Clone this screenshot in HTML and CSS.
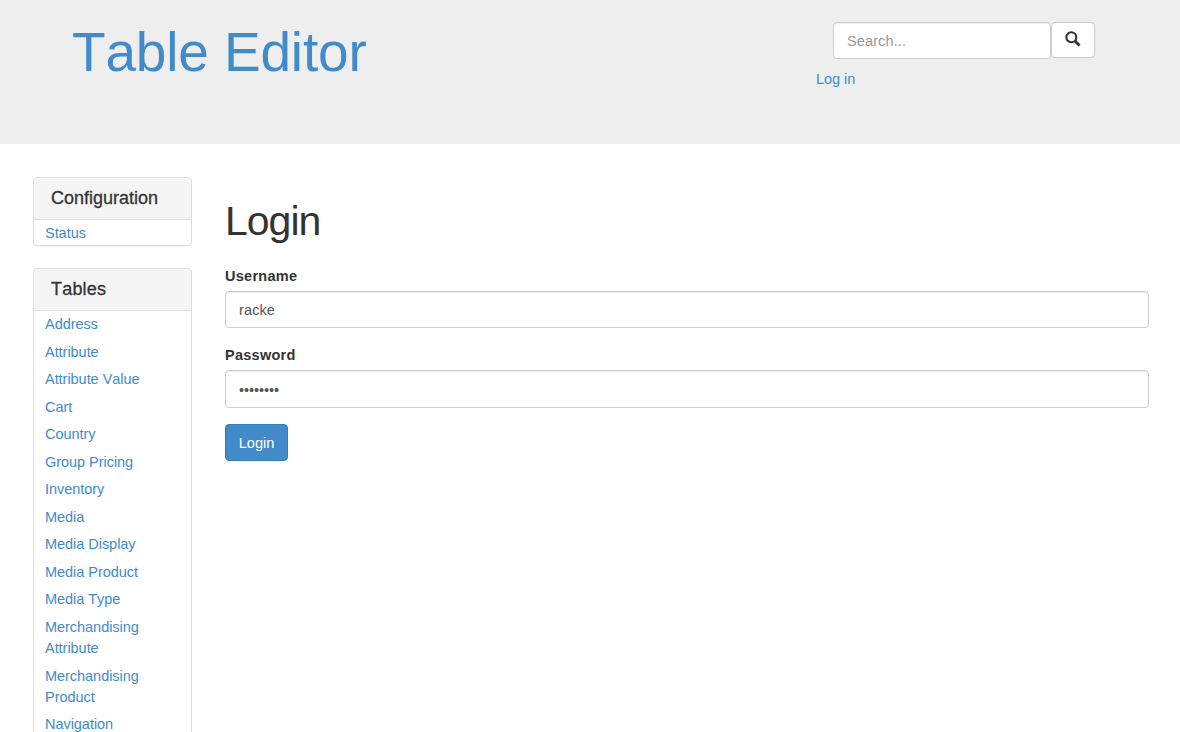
FILE: index.html
```html
<!DOCTYPE html>
<html lang="en"><head><meta charset="utf-8"><title>Table Editor</title><link rel="stylesheet" href="styles.css"></head>
<body>
<header class="jumbotron">
<h1 class="brand"><a href="#">Table Editor</a></h1>
<div class="tools">
<form class="search"><input class="control search-input" type="text" placeholder="Search..."><button class="search-button" type="button" aria-label="Search"><svg class="icon" viewBox="0 0 16 16"><circle cx="6.3" cy="6.3" r="5" fill="none" stroke="#333" stroke-width="2.1"/><path d="M10 10l4.5 4.5" stroke="#333" stroke-width="2.8"/></svg></button></form>
<a class="login-link" href="#">Log in</a>
</div>
</header>
<div class="page">
<aside class="sidebar">
<section class="panel"><h3 class="panel-title">Configuration</h3><ul class="links"><li><a href="#">Status</a></li></ul></section>
<section class="panel"><h3 class="panel-title panel-title-wide">Tables</h3><ul class="links"><li><a href="#">Address</a></li><li><a href="#">Attribute</a></li><li><a href="#">Attribute Value</a></li><li><a href="#">Cart</a></li><li><a href="#">Country</a></li><li><a href="#">Group Pricing</a></li><li><a href="#">Inventory</a></li><li><a href="#">Media</a></li><li><a href="#">Media Display</a></li><li><a href="#">Media Product</a></li><li><a href="#">Media Type</a></li><li><a href="#">Merchandising Attribute</a></li><li><a href="#">Merchandising Product</a></li><li><a href="#">Navigation</a></li></ul></section>
</aside>
<main class="content">
<h1 class="title">Login</h1>
<form>
<div class="group"><label class="label" for="u">Username</label><input class="control" id="u" type="text" value="racke"></div>
<div class="group"><label class="label" for="p">Password</label><input class="control password" id="p" type="password" value="password"></div>
<button class="submit" type="button">Login</button>
</form>
</main>
</div>
</body></html>
```
FILE: styles.css
```css
* { box-sizing: border-box; }
html { height: 100%; overflow: hidden; }
body { margin: 0; height: 732px; overflow: hidden; background: #fff; color: #333; font: 14.5px/21px "Liberation Sans", Arial, sans-serif; letter-spacing: -.04px; font-kerning: none; }
a { color: #428bca; text-decoration: none; }
.jumbotron { height: 144px; background: #eee; display: flex; justify-content: space-between; padding: 22px 85px 0 72px; }
.brand { margin: 0; font-size: 55px; line-height: 60px; font-weight: 500; letter-spacing: -.16px; }
.tools { width: 279px; }
.search { display: flex; margin-left: 17px; }
.control { display: block; width: 100%; height: 37px; padding: 6px 13px; border: 1px solid #ccc; border-radius: 4px; background: #fff; color: #555; font: inherit; letter-spacing: .12px; box-shadow: inset 0 1px 1px rgba(0,0,0,.075); }
.control::placeholder { color: #999; }
.search-input { width: 218px; }
.password { height: 38px; padding: 7px 13px 5px; letter-spacing: -.08px; }
.search-button { width: 44px; height: 36px; padding: 0 0 2px; border: 1px solid #ccc; border-radius: 4px; background: #fff; display: flex; align-items: center; justify-content: center; }
.icon { width: 16px; height: 16px; }
.login-link { display: block; margin-top: 10px; }
.page { display: flex; padding: 33px 31px 0 33px; gap: 33px; }
.sidebar { width: 159px; flex: none; }
.panel { border: 1px solid #ddd; border-radius: 4px; margin-bottom: 22px; overflow: hidden; box-shadow: 0 1px 1px rgba(0,0,0,.05); }
.panel-title { margin: 0; height: 42px; padding: 0 17px; background: #f5f5f5; border-bottom: 1px solid #ddd; font-size: 18px; line-height: 41px; font-weight: 500; letter-spacing: 0; -webkit-text-stroke: .3px #333; }
.panel-title-wide { letter-spacing: .2px; }
.links { list-style: none; margin: 0; padding: 3px 11px 1px; }
.links li { margin-bottom: 6.56px; }
.links li:last-child { margin-bottom: 0; }
.content { flex: 1; padding-top: 23px; }
.title { margin: 0 0 23px; font-size: 41px; line-height: 43px; font-weight: 500; letter-spacing: -1px; }
.group { margin-bottom: 16px; }
.label { display: block; font-weight: 700; letter-spacing: .26px; margin-bottom: 4px; }
.group + .group .label { padding-top: 1px; line-height: 20px; margin-bottom: 5px; }
.submit { display: block; height: 37px; width: 63px; padding: 1px 0 0; border: 1px solid #357ebd; border-radius: 4px; background: #428bca; color: #fff; font: inherit; letter-spacing: 0; }
```
